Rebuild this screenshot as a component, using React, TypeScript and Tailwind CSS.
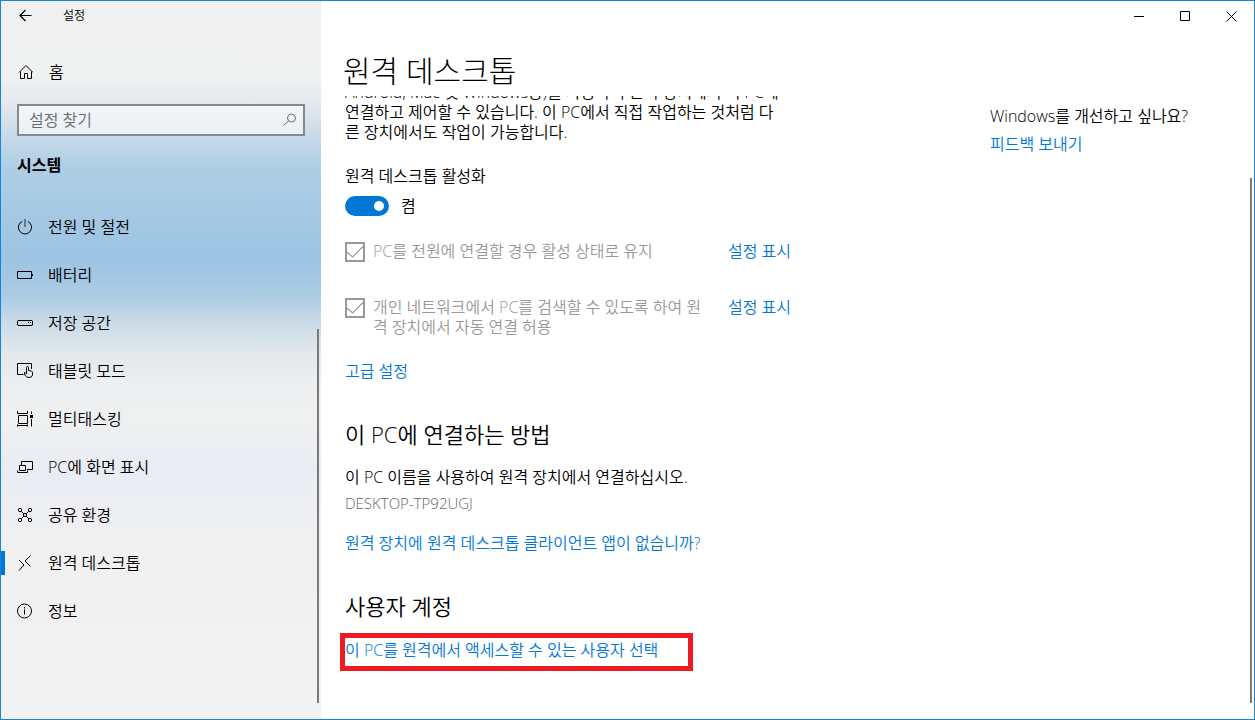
import React, { useState } from 'react';

type IconProps = { children: React.ReactNode; size?: number };

function Icon({ children, size = 16 }: IconProps) {
  return (
    <svg
      width={size}
      height={size}
      viewBox={`0 0 ${size} ${size}`}
      fill="none"
      stroke="currentColor"
      strokeWidth="1"
      className="shrink-0"
      aria-hidden="true"
    >
      {children}
    </svg>
  );
}

const icons = {
  back: (
    <Icon>
      <path d="M14.5 7.5H3M8.5 2L3 7.5L8.5 13" strokeWidth="1.2" />
    </Icon>
  ),
  home: (
    <Icon>
      <path d="M2 8.5L9 1.5L16 8.5M3.5 7.5V14.5H7.5V9.5H10.5V14.5H14.5V7.5" />
    </Icon>
  ),
  search: (
    <Icon>
      <circle cx="10.5" cy="6" r="4" />
      <path d="M7.5 9L2.5 13.5" />
    </Icon>
  ),
  power: (
    <Icon>
      <path d="M5.2 2.4A6.6 6.6 0 1 0 10.8 2.4" />
      <path d="M8 0V8" strokeWidth="1.4" stroke="#4b5a66" />
    </Icon>
  ),
  battery: (
    <Icon>
      <path d="M0.5 4.5H14.5V11.5H0.5ZM15.5 7V9" />
    </Icon>
  ),
  storage: (
    <Icon>
      <path d="M1 5.5H15L15.5 6V10L15 10.5H1L0.5 10V6Z" />
      <path d="M11 7.5H12M13 7.5H14" />
    </Icon>
  ),
  tablet: (
    <Icon>
      <path d="M6.5 11.5H0.5V0.5H14.5V6" />
      <path d="M9.5 10.5V4.5Q9.5 3.5 10.5 3.5Q11.5 3.5 11.5 4.5V7.5L14.5 8.2Q15.5 8.5 15.5 9.5V12Q15 14.5 12 14.5Q9.5 14.5 8.5 13L7.5 11V9.5L9.5 10.5" />
    </Icon>
  ),
  multitask: (
    <Icon>
      <path d="M0.5 0V2.5H10.5V0M1.5 4.5H10.5V12.5H1.5ZM0.5 15.5V13.5M0.5 14.5H10.5M10.5 13.5V15.5M14.5 0.5V3M14.5 8V15.5" />
      <path d="M13 4H16V7H13Z" fill="currentColor" stroke="none" />
    </Icon>
  ),
  project: (
    <Icon>
      <path d="M4.5 6V2.5H15.5V10.5H10M2.5 6.5H8.5V11.5H2.5ZM0.5 11.5V13.5H10.5V11.5" />
    </Icon>
  ),
  shared: (
    <Icon>
      <circle cx="3" cy="3" r="1.7" />
      <circle cx="13" cy="3" r="1.7" />
      <circle cx="3" cy="13" r="1.7" />
      <circle cx="13" cy="13" r="1.7" />
      <circle cx="8" cy="8" r="1.6" />
      <path d="M4.2 4.2L6.9 6.9M11.8 4.2L9.1 6.9M4.2 11.8L6.9 9.1M11.8 11.8L9.1 9.1" />
    </Icon>
  ),
  remote: (
    <Icon>
      <path d="M13.5 0.5L8 6L13.5 11.5M2 5L7 10L2 15.5" />
    </Icon>
  ),
  info: (
    <Icon>
      <circle cx="7.5" cy="8" r="7" />
      <path d="M7.5 6.5V11.5M7.5 4V5.5" />
    </Icon>
  ),
  check: (
    <Icon size={20}>
      <path d="M2 10L7.5 15L18 4.5" strokeWidth="1.2" />
    </Icon>
  ),
};

const navItems = [
  { label: '전원 및 절전', icon: icons.power },
  { label: '배터리', icon: icons.battery },
  { label: '저장 공간', icon: icons.storage },
  { label: '태블릿 모드', icon: icons.tablet },
  { label: '멀티태스킹', icon: icons.multitask },
  { label: 'PC에 화면 표시', icon: icons.project },
  { label: '공유 환경', icon: icons.shared },
  { label: '원격 데스크톱', icon: icons.remote },
  { label: '정보', icon: icons.info },
];

function Sidebar() {
  const [active, setActive] = useState('원격 데스크톱');

  return (
    <aside className="flex w-[320px] shrink-0 flex-col bg-[linear-gradient(180deg,#f0f0f0_0%,#f0f1f1_10%,#e5eaee_14%,#c6d9e8_19%,#afcee5_23%,#a5c9e4_29%,#9dc4e2_36%,#abcbe3_41%,#ccdce8_45%,#e2e8ec_49%,#eceef0_53%,#eff0f0_58%,#e9ecf3_65%,#eceef2_70%,#f1f1f1_77%,#f2f2f2_100%)]">
      <div className="flex h-[30px] shrink-0 items-center pl-4 text-xs">
        <button type="button" aria-label="뒤로">{icons.back}</button>
        <span className="pl-[30px]">설정</span>
      </div>
      <a href="#home" className="mt-[17px] flex h-12 shrink-0 items-center gap-4 pl-4">
        {icons.home}
        홈
      </a>
      <div className="mt-2 mr-4 ml-4 flex h-8 shrink-0 items-center border-2 border-[#83898d] bg-white/60 pr-1.5 pl-2.5 text-[#666b6f]">
        <input
          type="text"
          aria-label="설정 찾기"
          placeholder="설정 찾기"
          className="min-w-0 flex-1 bg-transparent outline-none placeholder:text-[#666b6f]"
        />
        {icons.search}
      </div>
      <h2 className="mt-4 shrink-0 pl-4 leading-[26px] font-bold">시스템</h2>
      <div className="mt-[25px] flex min-h-0 flex-1">
        <nav className="flex-1 overflow-hidden">
          {navItems.map((item) => (
            <a
              key={item.label}
              href="#"
              onClick={() => setActive(item.label)}
              aria-current={active === item.label ? 'page' : undefined}
              className="flex h-12 items-center"
            >
              <span className={`h-6 w-1 ${active === item.label ? 'bg-[#0078d7]' : ''}`} />
              <span className="flex items-center gap-[15px] pl-3">
                {item.icon}
                {item.label}
              </span>
            </a>
          ))}
        </nav>
        <div className="mr-0.5 flex w-0.5 flex-col pt-[126px] pb-4">
          <div className="flex-1 bg-[#7a7a7a]" />
        </div>
      </div>
    </aside>
  );
}

type OptionProps = { id: string; children: React.ReactNode };

function Option({ id, children }: OptionProps) {
  return (
    <div className="flex items-start">
      <span className="mt-px grid size-5 shrink-0 text-[#999999]">
        <input
          id={id}
          type="checkbox"
          defaultChecked
          disabled
          className="peer col-start-1 row-start-1 size-5 appearance-none border-2 border-[#999999]"
        />
        <span className="pointer-events-none invisible col-start-1 row-start-1 peer-checked:visible">
          {icons.check}
        </span>
      </span>
      <label htmlFor={id} className="flex-1 pl-2 whitespace-nowrap text-[#999999]">
        {children}
      </label>
      <Link>설정 표시</Link>
    </div>
  );
}

function Link({ children }: { children: React.ReactNode }) {
  return (
    <a href="#" className="whitespace-nowrap text-[#0078d7] hover:text-[#666666]">
      {children}
    </a>
  );
}

function CaptionButtons() {
  return (
    <div className="flex h-[30px] shrink-0 justify-end">
      <button type="button" aria-label="최소화" className="grid w-[46px] place-items-center hover:bg-black/10">
        <Icon size={11}><path d="M0 5.5H10" /></Icon>
      </button>
      <button type="button" aria-label="최대화" className="grid w-[46px] place-items-center hover:bg-black/10">
        <Icon size={11}><path d="M0.5 0.5H9.5V9.5H0.5Z" /></Icon>
      </button>
      <button type="button" aria-label="닫기" className="grid w-[46px] place-items-center hover:bg-red-600 hover:text-white">
        <Icon size={11}><path d="M0.5 0.5L10.5 10.5M10.5 0.5L0.5 10.5" /></Icon>
      </button>
    </div>
  );
}

export default function App() {
  const [enabled, setEnabled] = useState(true);

  return (
    <div className="flex h-screen overflow-hidden border border-[#1883d7] bg-white font-['Open_Sans','Noto_Sans_CJK_KR',sans-serif] text-base leading-5 font-[350] text-black">
      <Sidebar />
      <main className="flex min-w-0 flex-1 flex-col">
        <CaptionButtons />
        <h1 className="shrink-0 pt-[15px] pl-[22px] text-[30px] leading-[50px] font-light">원격 데스크톱</h1>
        <div className="flex min-h-0 flex-1 overflow-hidden pl-6">
          <div className="min-w-0 flex-1">
            <div className="w-[446px]">
              <p className="-mt-3.5 whitespace-nowrap">
                Android, Mac 및 Windows용)를 사용하여 원격 장치에서 이 PC에
                <br />
                연결하고 제어할 수 있습니다. 이 PC에서 직접 작업하는 것처럼 다
                <br />
                른 장치에서도 작업이 가능합니다.
              </p>

              <p className="mt-6" id="remote-label">원격 데스크톱 활성화</p>
              <label className="mt-2.5 flex items-center gap-3">
                <input
                  type="checkbox"
                  role="switch"
                  aria-labelledby="remote-label"
                  checked={enabled}
                  onChange={(e) => setEnabled(e.target.checked)}
                  className="flex h-5 w-11 appearance-none items-center rounded-full bg-[#999999] px-[5px] before:size-2.5 before:rounded-full before:bg-white checked:justify-end checked:bg-[#0078d7]"
                />
                {enabled ? '켬' : '끔'}
              </label>

              <div className="mt-[25px] flex flex-col gap-[35px]">
                <Option id="keep-awake">PC를 전원에 연결할 경우 활성 상태로 유지</Option>
                <Option id="discoverable">
                  개인 네트워크에서 PC를 검색할 수 있도록 하여 원
                  <br />
                  격 장치에서 자동 연결 허용
                </Option>
              </div>
              <p className="mt-6"><Link>고급 설정</Link></p>

              <h2 className="mt-10 text-[22px] leading-[26px]">이 PC에 연결하는 방법</h2>
              <p className="mt-5 whitespace-nowrap">이 PC 이름을 사용하여 원격 장치에서 연결하십시오.</p>
              <p className="mt-1.5 text-[15px] leading-5 text-[#666666]">DESKTOP-TP92UGJ</p>
              <p className="mt-5"><Link>원격 장치에 원격 데스크톱 클라이언트 앱이 없습니까?</Link></p>

              <h2 className="mt-10 text-[22px] leading-[26px]">사용자 계정</h2>
              <p className="mt-3.5 -ml-[5px] w-[353px] border-5 border-[#ed1c24] pt-0.5 pb-1.5">
                <Link>이 PC를 원격에서 액세스할 수 있는 사용자 선택</Link>
              </p>
            </div>
          </div>
          <section className="w-[260px] shrink-0 pt-2.5">
            <p>Windows를 개선하고 싶나요?</p>
            <p className="mt-2"><Link>피드백 보내기</Link></p>
          </section>
          <div className="mr-0.5 flex w-0.5 flex-col pt-[82px] pb-4">
            <div className="flex-1 bg-[#7a7a7a]" />
          </div>
        </div>
      </main>
    </div>
  );
}
